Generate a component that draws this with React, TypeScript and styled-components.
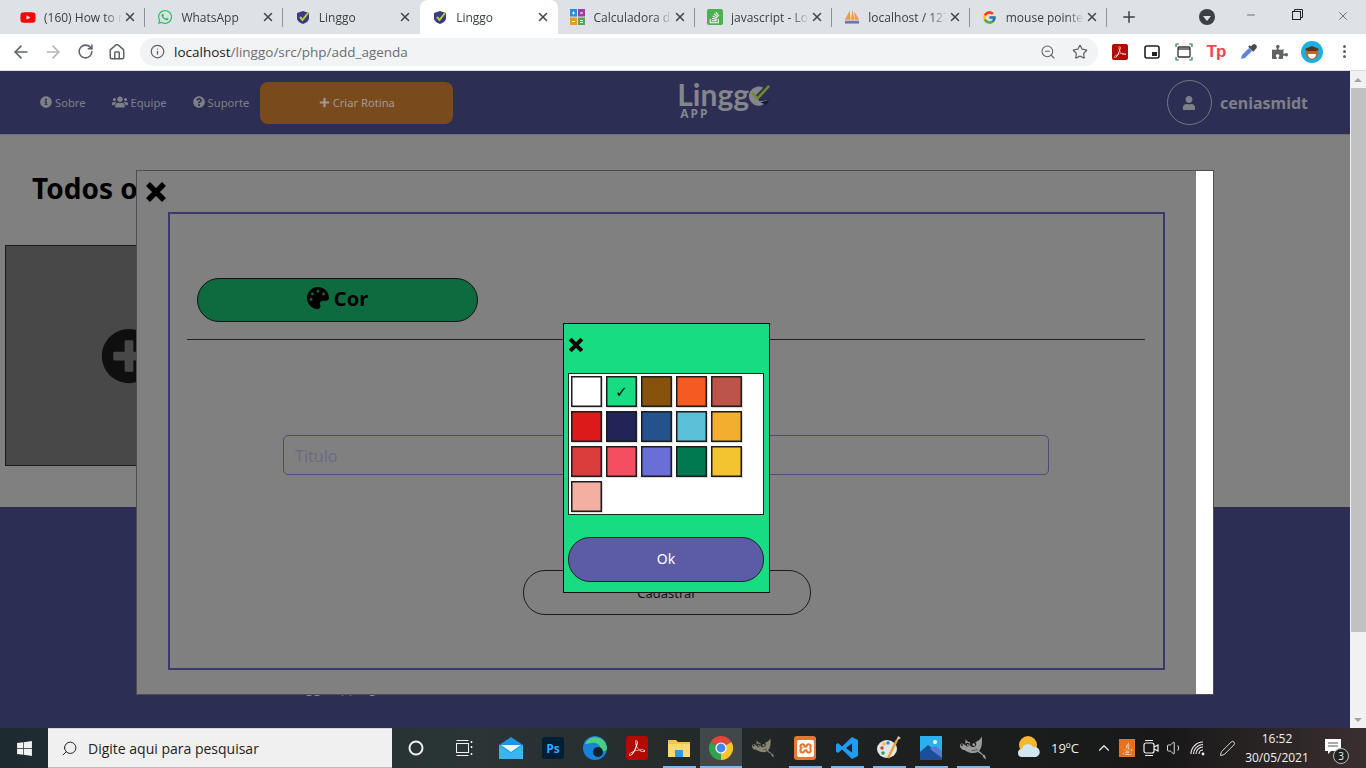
import React from "react";
import styled, { createGlobalStyle } from "styled-components";
import {
  ArrowLeft,
  ArrowRight,
  ChevronUp,
  Info,
  Minus,
  Pen,
  Plus,
  RotateCw,
  Search,
  Star,
  Home,
  Volume1,
  X,
  ZoomOut,
} from "lucide-react";
import {
  FaInfoCircle,
  FaJava,
  FaPalette,
  FaPlus,
  FaPlusCircle,
  FaPuzzlePiece,
  FaQuestionCircle,
  FaStackOverflow,
  FaUser,
  FaUsers,
  FaWhatsapp,
  FaWindows,
  FaYoutube,
} from "react-icons/fa";
import { FcGoogle } from "react-icons/fc";
import { SiAdobeacrobatreader, SiGimp, SiXampp } from "react-icons/si";

const pageFont = `"Noto Sans", "Open Sans", sans-serif`;
const chromeFont = `"Open Sans", "Noto Sans", sans-serif`;

const GlobalStyle = createGlobalStyle`
  html, body {
    margin: 0;
    padding: 0;
    width: 1366px;
    height: 768px;
    overflow: hidden;
  }
  * {
    box-sizing: border-box;
  }
`;

const Screen = styled.div`
  width: 1366px;
  height: 768px;
  display: flex;
  flex-direction: column;
  background: #fff;
`;

/* ---- chrome tabs ---- */

const TabStrip = styled.div`
  height: 34px;
  flex: none;
  display: flex;
  align-items: stretch;
  padding-left: 8px;
  background: #dee1e6;
  font-family: ${chromeFont};
`;

const Tab = styled.div<{ $active?: boolean; $sep?: boolean }>`
  width: 137.4px;
  display: flex;
  align-items: center;
  padding: 0 7px 0 12px;
  position: relative;
  border-radius: 8px 8px 0 0;
  background: ${(p) => (p.$active ? "#fff" : "transparent")};
  &::after {
    content: "";
    display: ${(p) => (p.$sep ? "block" : "none")};
    position: absolute;
    right: 0;
    top: 8px;
    bottom: 7px;
    width: 1px;
    background: #8f9296;
  }
`;

const Favicon = styled.span`
  width: 16px;
  height: 16px;
  flex: none;
  display: flex;
  align-items: center;
  justify-content: center;
`;

const TabTitle = styled.span`
  flex: 1;
  margin-left: 8px;
  font-size: 12px;
  color: #3c4043;
  white-space: nowrap;
  overflow: hidden;
  -webkit-mask-image: linear-gradient(to right, #000 78%, transparent 100%);
  mask-image: linear-gradient(to right, #000 78%, transparent 100%);
`;

const TabClose = styled.span`
  width: 16px;
  flex: none;
  display: flex;
  justify-content: center;
  color: #45484c;
`;

const NewTab = styled.span`
  width: 44px;
  display: flex;
  align-items: center;
  justify-content: center;
  color: #3c4043;
`;

const TabSearch = styled.span`
  margin-left: 48px;
  width: 16px;
  align-self: center;
  height: 16px;
  border-radius: 50%;
  background: #3c4043;
  display: flex;
  align-items: center;
  justify-content: center;
  &::after {
    content: "";
    border-left: 4px solid transparent;
    border-right: 4px solid transparent;
    border-top: 5px solid #dee1e6;
    margin-top: 2px;
  }
`;

const WindowControls = styled.div`
  margin-left: auto;
  display: flex;
`;

const WindowButton = styled.span`
  width: 46px;
  padding-top: 9px;
  display: flex;
  justify-content: center;
  color: #222;
`;

/* ---- chrome toolbar ---- */

const Toolbar = styled.div`
  height: 37px;
  flex: none;
  display: flex;
  align-items: center;
  padding: 0 0 1px 5px;
  background: #fff;
  border-bottom: 1px solid #dadce0;
  font-family: ${chromeFont};
`;

const ToolButton = styled.span<{ $dim?: boolean }>`
  width: 32px;
  height: 32px;
  flex: none;
  display: flex;
  align-items: center;
  justify-content: center;
  color: ${(p) => (p.$dim ? "#b4b6b9" : "#5f6368")};
`;

const Omnibox = styled.div`
  width: 958px;
  height: 28px;
  margin: 0 6px 0 7px;
  padding: 0 10px;
  border-radius: 14px;
  background: #f1f3f4;
  display: flex;
  align-items: center;
  color: #5f6368;
`;

const Url = styled.span`
  margin-left: 9px;
  font-size: 13.5px;
  color: #6b6f73;
  b {
    font-weight: 400;
    color: #202124;
  }
`;

const OmniActions = styled.span`
  margin-left: auto;
  display: flex;
  gap: 16px;
`;

const Badge = styled.span<{ $bg: string }>`
  width: 16px;
  height: 16px;
  border-radius: 2px;
  background: ${(p) => p.$bg};
  color: #fff;
  display: flex;
  align-items: center;
  justify-content: center;
`;

const AppBadge = styled(Badge)`
  width: 22px;
  height: 24px;
  border-radius: 3px;
`;

const TpMark = styled.span`
  font-family: "Liberation Sans", sans-serif;
  font-weight: 700;
  font-size: 17px;
  letter-spacing: -1px;
  color: #f0464f;
`;

const ProfileFace = styled.span`
  width: 22px;
  height: 22px;
  border-radius: 50%;
  background: #1cb0e0;
  display: flex;
  align-items: center;
  justify-content: center;
`;

const Dots = styled.span`
  display: flex;
  flex-direction: column;
  gap: 2px;
  i {
    width: 3px;
    height: 3px;
    border-radius: 50%;
    background: #5f6368;
  }
`;

/* ---- the page ---- */

const Viewport = styled.div`
  flex: 1;
  display: flex;
  min-height: 0;
`;

const Main = styled.div`
  flex: 1;
  position: relative;
  display: flex;
  flex-direction: column;
  font-family: ${pageFont};
  overflow: hidden;
`;

const Header = styled.header`
  height: 63px;
  flex: none;
  display: flex;
  align-items: center;
  padding: 0 42px 0 40px;
  background: #2c2e54;
  color: #7f7f88;
`;

const NavLink = styled.span`
  display: flex;
  align-items: center;
  gap: 3px;
  font-size: 11.2px;
  margin-right: 26px;
  margin-top: -1px;
  &:nth-of-type(3) {
    margin-right: 11px;
  }
`;

const CreateButton = styled.span`
  width: 193px;
  height: 42px;
  border-radius: 8px;
  background: #794a1c;
  color: #a19c98;
  font-size: 11.2px;
  display: flex;
  align-items: center;
  justify-content: center;
  gap: 3px;
`;

const Logo = styled.div`
  width: 93px;
  height: 40px;
  margin-left: 224px;
  position: relative;
  color: #85858e;
`;

const LogoWord = styled.span`
  display: block;
  font-family: Lato, sans-serif;
  font-weight: 700;
  font-size: 30px;
  line-height: 23px;
`;

const LogoApp = styled.span`
  position: absolute;
  left: 3px;
  top: 25px;
  font-size: 12px;
  line-height: 11px;
  font-weight: 700;
  letter-spacing: 2px;
`;

const LogoCheck = styled.svg`
  position: absolute;
  left: 71px;
  top: 1px;
`;

const UserBox = styled.div`
  margin-left: auto;
  display: flex;
  align-items: center;
  gap: 8px;
`;

const UserCircle = styled.span`
  width: 45px;
  height: 45px;
  border-radius: 50%;
  border: 1px solid #77777f;
  display: flex;
  align-items: center;
  justify-content: center;
`;

const UserName = styled.span`
  font-size: 16px;
  font-weight: 700;
`;

const Content = styled.section`
  height: 373px;
  flex: none;
  padding-top: 35px;
  background: #808080;
  border-top: 1px solid #6f6f6f;
`;

const Heading = styled.h1`
  margin: 0 0 39px 32px;
  font-size: 28px;
  line-height: 36px;
  font-weight: 700;
  color: #000;
`;

const AddCard = styled.div`
  width: 248px;
  height: 221px;
  margin-left: 5px;
  background: #484848;
  border: 1px solid #1a1a1a;
  display: flex;
  align-items: center;
  justify-content: center;
  color: #0f0f0f;
`;

const Footer = styled.footer`
  flex: 1;
  background: #2c2e54;
  padding: 172px 0 0 287px;
  color: #85858e;
  font-size: 13px;
`;

/* ---- register modal, lies over the page ---- */

const Modal = styled.div`
  position: absolute;
  left: 136px;
  top: 99px;
  width: 1078px;
  height: 525px;
  display: flex;
  border: 1px solid #4e4e4e;
  background: #808080;
`;

const ModalBody = styled.div`
  flex: 1;
  display: flex;
  flex-direction: column;
`;

const ModalClose = styled.div`
  height: 41px;
  flex: none;
  padding: 10px 0 0 8px;
`;

const ModalGutter = styled.div`
  width: 17px;
  background: #fff;
`;

const Frame = styled.form`
  width: 997px;
  height: 458px;
  margin-left: 31px;
  border: 2px solid #3a3a6a;
  display: flex;
  flex-direction: column;
  align-items: flex-start;
`;

const ColorButton = styled.span`
  width: 281px;
  height: 44px;
  margin: 64px 0 0 27px;
  padding-bottom: 4px;
  border: 1px solid #111;
  border-radius: 22px;
  background: #0e6b40;
  color: #000;
  font-size: 20px;
  font-weight: 700;
  display: flex;
  align-items: center;
  justify-content: center;
  gap: 5px;
`;

const Rule = styled.hr`
  width: 958px;
  height: 1px;
  margin: 17px 0 0 17px;
  border: 0;
  background: #222;
`;

const TitleInput = styled.div`
  width: 766px;
  height: 40px;
  margin: 95px 0 0 113px;
  padding: 1px 0 0 11px;
  border: 1px solid #4c4c78;
  border-radius: 5px;
  display: flex;
  align-items: center;
  font-size: 16px;
  color: #6b6b80;
`;

const SubmitButton = styled.span`
  width: 288px;
  height: 45px;
  margin: 95px 0 0 353px;
  border: 1px solid #1c1c1c;
  border-radius: 22px;
  display: flex;
  align-items: center;
  justify-content: center;
  font-size: 13px;
  color: #111;
`;

/* ---- colour picker, lies over the modal ---- */

const Picker = styled.div`
  position: absolute;
  left: 563px;
  top: 252px;
  width: 207px;
  height: 270px;
  padding: 0 4px;
  background: #18dc82;
  border: 1px solid #111;
`;

const PickerClose = styled.div`
  height: 49px;
  padding-top: 12px;
`;

const SwatchGrid = styled.div`
  width: 196px;
  height: 142px;
  padding: 2px;
  background: #fff;
  border: 1px solid #222;
  display: grid;
  grid-template-columns: repeat(5, 31px);
  grid-auto-rows: 31px;
  gap: 4px;
`;

const Swatch = styled.span<{ $color: string }>`
  background: ${(p) => p.$color};
  border: 1px solid #1c1c1c;
  box-shadow: inset 0 0 0 0.5px #1c1c1c, 1px 1px 0 #d8d8d8;
  display: flex;
  align-items: center;
  justify-content: center;
  color: #000;
  font-family: "DejaVu Sans", sans-serif;
  font-size: 15px;
`;

const OkButton = styled.span`
  height: 45px;
  width: 196px;
  margin-top: 22px;
  padding-bottom: 2px;
  border: 1px solid #222;
  border-radius: 22px;
  background: #5b5ba6;
  color: #fff;
  font-size: 14px;
  display: flex;
  align-items: center;
  justify-content: center;
`;

/* ---- page scrollbar ---- */

const Scrollbar = styled.div`
  width: 16px;
  flex: none;
  display: flex;
  flex-direction: column;
  align-items: center;
  background: #f1f1f1;
`;

const ScrollArrow = styled.span<{ $down?: boolean }>`
  height: 17px;
  flex: none;
  display: flex;
  align-items: center;
  justify-content: center;
  margin-top: ${(p) => (p.$down ? "auto" : "0")};
  &::after {
    content: "";
    border-left: 4px solid transparent;
    border-right: 4px solid transparent;
    ${(p) => (p.$down ? "border-top" : "border-bottom")}: 4px solid #a3a3a3;
  }
`;

const ScrollThumb = styled.span`
  width: 15px;
  height: 544px;
  margin-left: 1px;
  background: #c1c1c1;
`;

/* ---- windows taskbar ---- */

const Taskbar = styled.div`
  height: 40px;
  flex: none;
  display: flex;
  align-items: stretch;
  color: #f2f2f2;
  font-family: ${chromeFont};
  background: linear-gradient(90deg, #1d2a30 0%, #2b3536 35%, #1f2222 62%, #181818 85%, #3a2f30 100%);
`;

const StartButton = styled.span`
  width: 48px;
  flex: none;
  display: flex;
  align-items: center;
  justify-content: center;
`;

const SearchBox = styled.div`
  width: 344px;
  flex: none;
  padding-left: 13px;
  display: flex;
  align-items: center;
  gap: 10px;
  background: #f0f0f0;
  border-top: 1px solid #d8d8d8;
  border-bottom: 1px solid #bdbdbd;
  color: #222;
  font-size: 14px;
`;

const SearchGlass = styled(Search)`
  transform: scaleX(-1);
`;

const TaskSlot = styled.span`
  width: 48px;
  flex: none;
  display: flex;
  align-items: center;
  justify-content: center;
`;

const AppRow = styled.div`
  margin-left: 2px;
  flex: none;
  display: flex;
`;

const AppSlot = styled.span<{ $open?: boolean; $current?: boolean }>`
  width: 42px;
  position: relative;
  display: flex;
  align-items: center;
  justify-content: center;
  background: ${(p) => (p.$current ? "#42484a" : "transparent")};
  &::after {
    content: "";
    display: ${(p) => (p.$open ? "block" : "none")};
    position: absolute;
    bottom: 0;
    height: 2px;
    left: ${(p) => (p.$current ? "0" : "5px")};
    right: ${(p) => (p.$current ? "0" : "4px")};
    background: #76b9ed;
  }
`;

const PsIcon = styled.span`
  width: 22px;
  height: 22px;
  border-radius: 3px;
  background: #001e36;
  color: #31a8ff;
  font-size: 12px;
  font-weight: 700;
  display: flex;
  align-items: center;
  justify-content: center;
`;

const Tray = styled.div`
  margin-left: 20px;
  flex: 1;
  display: flex;
  align-items: center;
`;

const TraySlot = styled.span<{ $w: number }>`
  width: ${(p) => p.$w}px;
  height: 100%;
  flex: none;
  display: flex;
  align-items: center;
  justify-content: center;
`;

const Temp = styled.span`
  width: 41px;
  flex: none;
  margin-left: 7px;
  font-size: 13px;
`;

const JavaBox = styled.span`
  width: 16px;
  height: 18px;
  background: #e8721c;
  color: #fff;
  display: flex;
  align-items: center;
  justify-content: center;
`;

const Clock = styled.span`
  width: 70px;
  flex: none;
  text-align: center;
  font-size: 12px;
  line-height: 19px;
`;

const NotifyWrap = styled.span`
  margin-left: 12px;
  position: relative;
  width: 24px;
  height: 24px;
  padding-top: 2px;
  flex: none;
`;

const NotifyCount = styled.span`
  position: absolute;
  right: -1px;
  bottom: -4px;
  width: 16px;
  height: 16px;
  border-radius: 50%;
  border: 1px solid #bbb;
  background: #222;
  font-size: 10px;
  line-height: 14px;
  text-align: center;
`;

/* ---- little drawings ---- */

const CloseMark = ({ size, weight }: { size: number; weight: number }) => (
  <svg width={size} height={size} viewBox="0 0 22 22">
    <path d="M3 3 L19 19 M19 3 L3 19" stroke="#000" strokeWidth={weight} fill="none" />
  </svg>
);

const LinggoFav = () => (
  <svg width="14" height="15" viewBox="0 0 14 15">
    <path d="M7 1 L13 3 V8 C13 11 10 13 7 14 C4 13 1 11 1 8 V3 Z" fill="#3b3b85" />
    <path d="M4 7 L6.5 10 L12 3" fill="none" stroke="#b4cf3c" strokeWidth="2" />
  </svg>
);

const CalcFav = () => (
  <svg width="15" height="16" viewBox="0 0 15 16">
    <rect x="0" y="0" width="7" height="7.5" fill="#2b8fd8" />
    <rect x="8" y="0" width="7" height="7.5" fill="#a03ba8" />
    <rect x="0" y="8.5" width="7" height="7.5" fill="#f09a1a" />
    <rect x="8" y="8.5" width="7" height="7.5" fill="#55a84a" />
    <path d="M2 4h3M3.5 2.5v3M10 4h3M2 12.5h3M10 11.5h3M10 13.5h3" stroke="#fff" />
  </svg>
);

const PmaFav = () => (
  <svg width="17" height="16" viewBox="0 0 17 16">
    <path d="M1 11 L6 1 L7 11 Z M7.5 11 L9 0 L11 11 Z M11.5 11 L11 2 L16 11 Z" fill="#f09a3a" />
    <rect x="1" y="12" width="15" height="3" fill="#6c78af" />
  </svg>
);

const PipIcon = () => (
  <svg width="16" height="14" viewBox="0 0 16 14">
    <rect x="1" y="1" width="14" height="12" rx="2" fill="none" stroke="#222" strokeWidth="1.6" />
    <rect x="8" y="7" width="5" height="4" fill="#222" />
  </svg>
);

const CaptureIcon = () => (
  <svg width="18" height="18" viewBox="0 0 18 18">
    <path d="M1 4V1h3M14 1h3v3M1 14v3h3M14 17h3v-3" fill="none" stroke="#2e8b35" strokeWidth="1.2" />
    <rect x="3" y="4" width="12" height="10" rx="1" fill="none" stroke="#333" strokeWidth="1.3" />
    <path d="M3 6h12" stroke="#333" strokeWidth="1.3" />
  </svg>
);

const DropperIcon = () => (
  <svg width="18" height="18" viewBox="0 0 18 18">
    <path d="M2 16 L3 12 L10 5 L13 8 L6 15 Z" fill="#5f85d8" />
    <path d="M10 3 L15 8 M12 5 L14.5 2.5 a1.5 1.5 0 0 1 2 2 L14 7" stroke="#4a4a4a" strokeWidth="2.4" fill="#4a4a4a" />
  </svg>
);

const FaceIcon = () => (
  <svg width="18" height="18" viewBox="0 0 18 18">
    <circle cx="9" cy="10" r="6.5" fill="#b8682e" />
    <path d="M2 6 L9 3 L16 6 L14 8 H4 Z" fill="#5b3315" />
    <path d="M5 11 H13 C13 14 11 15.5 9 15.5 C7 15.5 5 14 5 11 Z" fill="#fff" />
  </svg>
);

const CortanaIcon = () => (
  <svg width="18" height="18" viewBox="0 0 18 18">
    <circle cx="9" cy="9" r="6.5" fill="none" stroke="#f2f2f2" strokeWidth="2" />
  </svg>
);

const TaskViewIcon = () => (
  <svg width="18" height="18" viewBox="0 0 18 18" fill="none" stroke="#f2f2f2">
    <path d="M1.5 1.5h12M1.5 16.5h12" />
    <rect x="1.5" y="4.5" width="12" height="9" />
    <path d="M16.5 2v2M16.5 7v2M16.5 14v2" strokeWidth="1.5" />
  </svg>
);

const MailIcon = () => (
  <svg width="24" height="24" viewBox="0 0 24 24">
    <path d="M12 1 L24 9 V23 H0 V9 Z" fill="#1d96e8" />
    <path d="M2 9 H22 L12 16 Z" fill="#e8f6ff" />
    <path d="M0 9 L12 17 L24 9 V23 H0 Z" fill="#3ab4f2" />
  </svg>
);

const EdgeIcon = () => (
  <svg width="24" height="24" viewBox="0 0 24 24">
    <circle cx="12" cy="12" r="12" fill="#1682d8" />
    <path d="M2 8 C6 -2 22 -1 24 12 C24 15 20 16 17 15 C19 10 14 6 9 7 C6 7.5 3 8 2 8 Z" fill="#4ccf7e" />
    <circle cx="15" cy="16" r="5" fill="#11222e" />
  </svg>
);

const FolderIcon = () => (
  <svg width="24" height="22" viewBox="0 0 24 22">
    <path d="M1 3 H9 L11 5 H23 V20 H1 Z" fill="#f6c34a" />
    <rect x="1" y="7" width="22" height="13" fill="#fbd872" />
    <rect x="8" y="13" width="8" height="7" fill="#2d9be0" />
  </svg>
);

const ChromeIcon = () => (
  <svg width="24" height="24" viewBox="0 0 24 24">
    <path d="M12 12 L1.6 6 A12 12 0 0 1 22.4 6 Z" fill="#e2453a" />
    <path d="M12 12 L22.4 6 A12 12 0 0 1 12 24 Z" fill="#f7c32f" />
    <path d="M12 12 L12 24 A12 12 0 0 1 1.6 6 Z" fill="#2fa24f" />
    <circle cx="12" cy="12" r="5.6" fill="#fff" />
    <circle cx="12" cy="12" r="4.4" fill="#4285f4" />
  </svg>
);

const VsCodeIcon = () => (
  <svg width="24" height="24" viewBox="0 0 24 24">
    <path d="M17 1 L23 4 V20 L17 23 L7 13.5 L3 17 L1 15.5 V8.5 L3 7 L7 10.5 Z M17 7.5 L11 12 L17 16.5 Z" fill="#1f9cf0" />
  </svg>
);

const PaintIcon = () => (
  <svg width="26" height="26" viewBox="0 0 26 26">
    <ellipse cx="11" cy="14" rx="10" ry="9" fill="#dfe7ee" />
    <circle cx="6" cy="13" r="1.8" fill="#d8413a" />
    <circle cx="8" cy="9" r="1.8" fill="#f0c030" />
    <circle cx="7" cy="18" r="1.8" fill="#3a9a4a" />
    <circle cx="12" cy="8" r="1.8" fill="#3a8ad8" />
    <path d="M12 23 L21 5" stroke="#f0a02a" strokeWidth="2.4" />
    <path d="M20 6 L22 1 L25 3 Z" fill="#e0c8a0" />
  </svg>
);

const PhotosIcon = () => (
  <svg width="22" height="24" viewBox="0 0 22 24">
    <rect width="22" height="24" fill="#2bb0ee" />
    <circle cx="15" cy="6" r="2" fill="#fff" />
    <path d="M0 16 L8 9 L22 20 V24 H0 Z" fill="#1b4f9a" />
    <path d="M10 13 L15 10 L22 15 V22 Z" fill="#5a78d8" />
  </svg>
);

const WeatherIcon = () => (
  <svg width="26" height="26" viewBox="0 0 26 26">
    <circle cx="12" cy="10" r="9" fill="#f7b62e" />
    <path d="M6 22 A4 4 0 0 1 6 14 A6 6 0 0 1 17 12 A5 5 0 0 1 20 22 Z" fill="#cfe6f5" />
  </svg>
);

const MeetIcon = () => (
  <svg width="18" height="20" viewBox="0 0 18 20" fill="none" stroke="#f2f2f2" strokeWidth="1.2">
    <rect x="2" y="5" width="10" height="10" rx="2" />
    <path d="M12 9 L16 7 V13 L12 11 M3 2.5 H11 M3 17.5 H11" />
  </svg>
);

const WifiIcon = () => (
  <svg width="18" height="18" viewBox="0 0 18 18" fill="none" stroke="#f2f2f2" strokeWidth="1.1">
    <circle cx="13" cy="15" r="1.4" fill="#f2f2f2" stroke="none" />
    <path d="M9 15 A4 4 0 0 1 13 11 M6 15 A7 7 0 0 1 13 8 M3.5 15 A9.5 9.5 0 0 1 13 5.5 M1 15 A12 12 0 0 1 13 3" />
  </svg>
);

/* ---- data ---- */

const tabs = [
  { title: "(160) How to make", icon: <FaYoutube size={17} color="#f00" />, sep: true },
  { title: "WhatsApp", icon: <FaWhatsapp size={16} color="#25c35d" />, sep: true },
  { title: "Linggo", icon: <LinggoFav /> },
  { title: "Linggo", icon: <LinggoFav />, active: true },
  { title: "Calculadora de", icon: <CalcFav />, sep: true },
  {
    title: "javascript - Look",
    icon: (
      <Badge $bg="#4caf50">
        <FaStackOverflow size={13} />
      </Badge>
    ),
    sep: true,
  },
  { title: "localhost / 127.0", icon: <PmaFav />, sep: true },
  { title: "mouse pointer", icon: <FcGoogle size={15} />, sep: true },
];

const swatches = [
  "#ffffff", "#18dc82", "#86520c", "#f55a22", "#bc5449",
  "#dc1a1a", "#232358", "#23528d", "#5bc0d8", "#f3ae30",
  "#db3c3c", "#f54e60", "#6a6fd8", "#007850", "#f4c430",
  "#f3b0a2",
];

const apps = [
  { icon: <MailIcon /> },
  { icon: <PsIcon>Ps</PsIcon> },
  { icon: <EdgeIcon /> },
  { icon: <AppBadge $bg="#b30b00"><SiAdobeacrobatreader size={16} /></AppBadge> },
  { icon: <FolderIcon />, open: true },
  { icon: <ChromeIcon />, open: true, current: true },
  { icon: <SiGimp size={22} color="#8a8272" /> },
  { icon: <AppBadge $bg="#e8762c"><SiXampp size={17} /></AppBadge>, open: true },
  { icon: <VsCodeIcon />, open: true },
  { icon: <PaintIcon />, open: true },
  { icon: <PhotosIcon />, open: true },
  { icon: <SiGimp size={26} color="#9b9b9b" />, open: true },
];

export default function App() {
  return (
    <Screen>
      <GlobalStyle />
      <TabStrip>
        {tabs.map((tab, i) => (
          <Tab key={i} $active={tab.active} $sep={tab.sep}>
            <Favicon>{tab.icon}</Favicon>
            <TabTitle>{tab.title}</TabTitle>
            <TabClose>
              <X size={14} strokeWidth={2.6} />
            </TabClose>
          </Tab>
        ))}
        <NewTab>
          <Plus size={18} strokeWidth={2} />
        </NewTab>
        <TabSearch />
        <WindowControls>
          <WindowButton>
            <Minus size={12} strokeWidth={1.2} />
          </WindowButton>
          <WindowButton>
            <svg width="11" height="11" viewBox="0 0 11 11" fill="none" stroke="#222">
              <rect x="0.5" y="2.5" width="8" height="8" />
              <path d="M2.5 2.5V0.5H10.5V8.5H8.5" />
            </svg>
          </WindowButton>
          <WindowButton>
            <X size={14} strokeWidth={1} />
          </WindowButton>
        </WindowControls>
      </TabStrip>

      <Toolbar>
        <ToolButton>
          <ArrowLeft size={20} />
        </ToolButton>
        <ToolButton $dim>
          <ArrowRight size={20} />
        </ToolButton>
        <ToolButton>
          <RotateCw size={17} strokeWidth={2.2} />
        </ToolButton>
        <ToolButton>
          <Home size={18} />
        </ToolButton>
        <Omnibox>
          <Info size={15} />
          <Url>
            <b>localhost</b>/linggo/src/php/add_agenda
          </Url>
          <OmniActions>
            <ZoomOut size={16} strokeWidth={1.6} />
            <Star size={16} strokeWidth={1.8} />
          </OmniActions>
        </Omnibox>
        <ToolButton>
          <Badge $bg="#b30b00">
            <SiAdobeacrobatreader size={12} />
          </Badge>
        </ToolButton>
        <ToolButton>
          <PipIcon />
        </ToolButton>
        <ToolButton>
          <CaptureIcon />
        </ToolButton>
        <ToolButton>
          <TpMark>Tp</TpMark>
        </ToolButton>
        <ToolButton>
          <DropperIcon />
        </ToolButton>
        <ToolButton>
          <FaPuzzlePiece size={16} />
        </ToolButton>
        <ToolButton>
          <ProfileFace>
            <FaceIcon />
          </ProfileFace>
        </ToolButton>
        <ToolButton>
          <Dots>
            <i />
            <i />
            <i />
          </Dots>
        </ToolButton>
      </Toolbar>

      <Viewport>
        <Main>
          <Header>
            <NavLink>
              <FaInfoCircle size={12} /> Sobre
            </NavLink>
            <NavLink>
              <FaUsers size={16} /> Equipe
            </NavLink>
            <NavLink>
              <FaQuestionCircle size={12} /> Suporte
            </NavLink>
            <CreateButton>
              <FaPlus size={11} /> Criar Rotina
            </CreateButton>
            <Logo>
              <LogoWord>Lingg</LogoWord>
              <LogoApp>APP</LogoApp>
              <LogoCheck width="23" height="23" viewBox="0 0 24 24">
                <path d="M20 17 A10 10 0 1 1 16 4 L8 12 L12 18 Z" fill="#85858e" />
                <path d="M13 19 L22 17 L19 22 Z" fill="#16163a" />
                <path d="M4 9 L10 15 L22 2" fill="none" stroke="#6f8a2a" strokeWidth="2.6" />
              </LogoCheck>
            </Logo>
            <UserBox>
              <UserCircle>
                <FaUser size={14} />
              </UserCircle>
              <UserName>ceniasmidt</UserName>
            </UserBox>
          </Header>
          <Content>
            <Heading>Todos os</Heading>
            <AddCard>
              <FaPlusCircle size={56} />
            </AddCard>
          </Content>
          <Footer>Linggo App Agenda</Footer>

          <Modal>
            <ModalBody>
              <ModalClose>
                <CloseMark size={22} weight={5.5} />
              </ModalClose>
              <Frame>
                <ColorButton>
                  <FaPalette size={22} /> Cor
                </ColorButton>
                <Rule />
                <TitleInput>Titulo</TitleInput>
                <SubmitButton>Cadastrar</SubmitButton>
              </Frame>
            </ModalBody>
            <ModalGutter />
          </Modal>

          <Picker>
            <PickerClose>
              <CloseMark size={16} weight={5.5} />
            </PickerClose>
            <SwatchGrid>
              {swatches.map((color, i) => (
                <Swatch key={i} $color={color}>
                  {i === 1 && "✓"}
                </Swatch>
              ))}
            </SwatchGrid>
            <OkButton>Ok</OkButton>
          </Picker>
        </Main>
        <Scrollbar>
          <ScrollArrow />
          <ScrollThumb />
          <ScrollArrow $down />
        </Scrollbar>
      </Viewport>

      <Taskbar>
        <StartButton>
          <FaWindows size={17} />
        </StartButton>
        <SearchBox>
          <SearchGlass size={17} strokeWidth={1.4} />
          Digite aqui para pesquisar
        </SearchBox>
        <TaskSlot>
          <CortanaIcon />
        </TaskSlot>
        <TaskSlot>
          <TaskViewIcon />
        </TaskSlot>
        <AppRow>
          {apps.map((app, i) => (
            <AppSlot key={i} $open={app.open} $current={app.current}>
              {app.icon}
            </AppSlot>
          ))}
        </AppRow>
        <Tray>
          <TraySlot $w={30}>
            <WeatherIcon />
          </TraySlot>
          <Temp>19ºC</Temp>
          <TraySlot $w={23}>
            <ChevronUp size={18} strokeWidth={1.5} />
          </TraySlot>
          <TraySlot $w={24}>
            <JavaBox>
              <FaJava size={13} />
            </JavaBox>
          </TraySlot>
          <TraySlot $w={24}>
            <MeetIcon />
          </TraySlot>
          <TraySlot $w={23}>
            <Volume1 size={18} strokeWidth={1.2} />
          </TraySlot>
          <TraySlot $w={26}>
            <WifiIcon />
          </TraySlot>
          <TraySlot $w={30}>
            <Pen size={17} strokeWidth={1.2} />
          </TraySlot>
          <Clock>
            16:52
            <br />
            30/05/2021
          </Clock>
          <NotifyWrap>
            <svg width="18" height="18" viewBox="0 0 18 18">
              <path d="M1 1 H17 V13 H7 L4 16 V13 H1 Z" fill="#fff" />
              <path d="M4 5 H14 M4 8 H14" stroke="#555" />
            </svg>
            <NotifyCount>3</NotifyCount>
          </NotifyWrap>
        </Tray>
      </Taskbar>
    </Screen>
  );
}
